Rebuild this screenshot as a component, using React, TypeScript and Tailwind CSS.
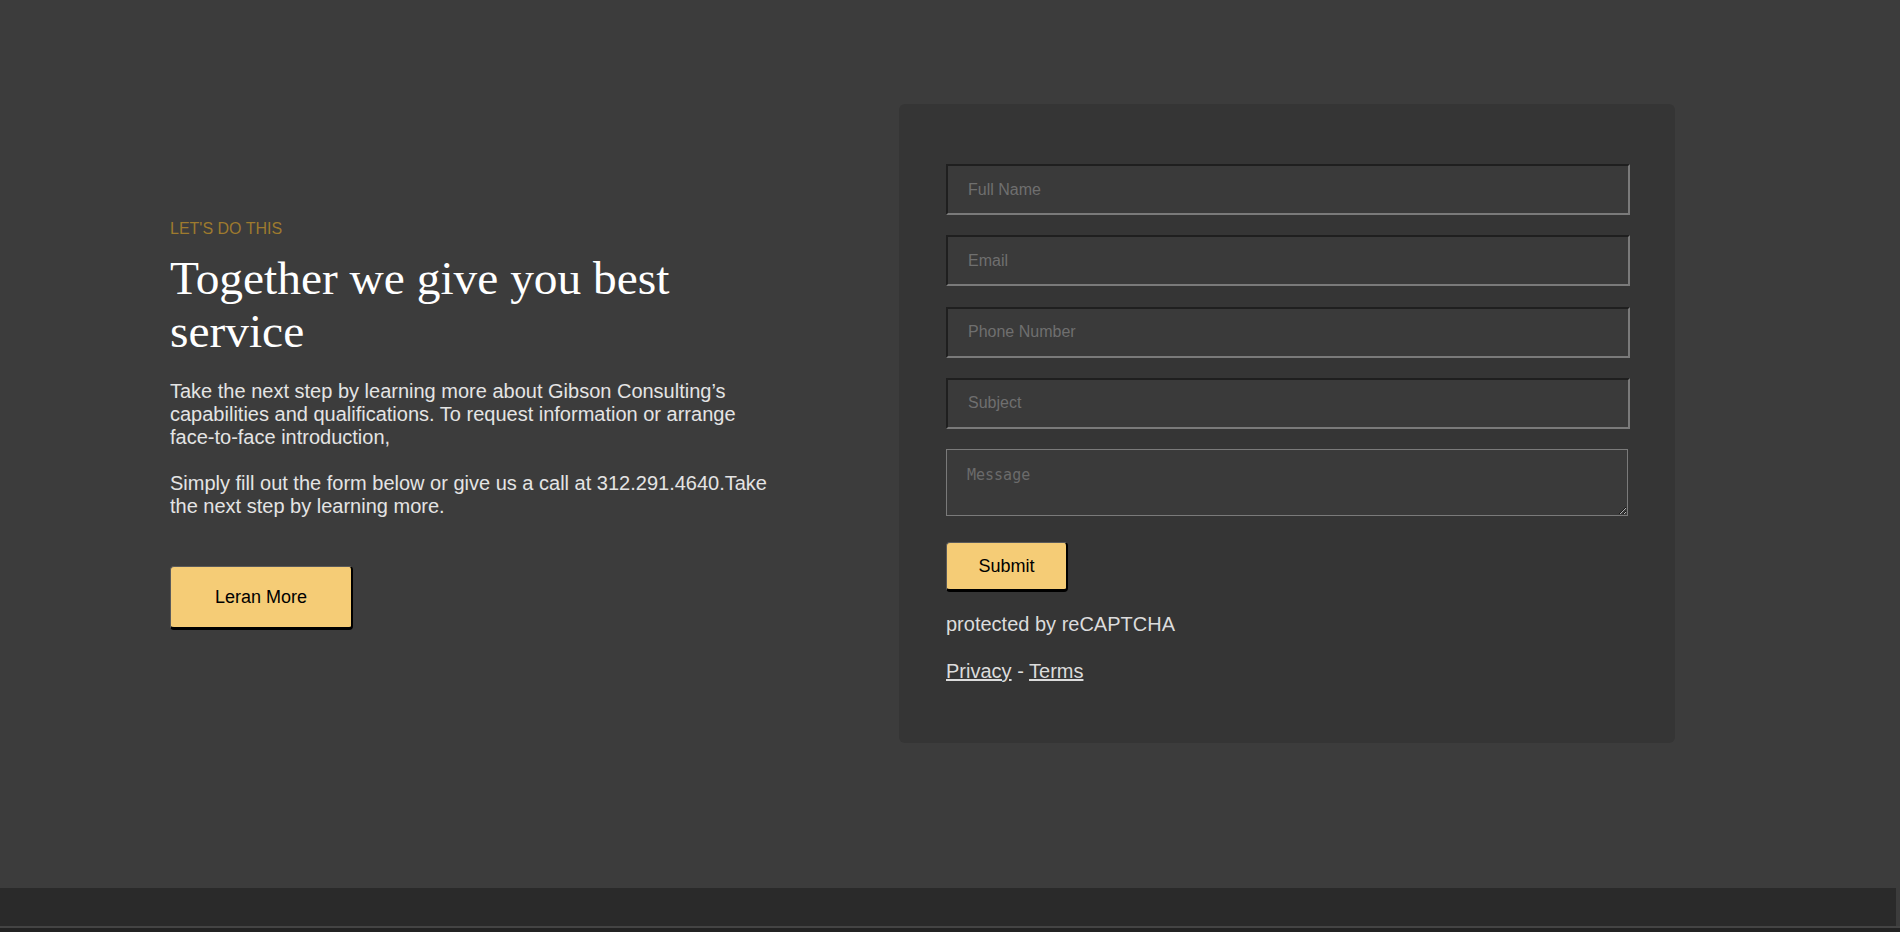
export default function App() {
  const fields = ["Full Name", "Email", "Phone Number", "Subject"];

  return (
    <div className="bg-[#3c3c3c] font-['Liberation_Sans',Arial,sans-serif]">
      <section className="h-[888px] pt-[104px]">
        <div className="flex items-center pl-[170px]">
          <div className="w-[729px]">
            <div className="w-[608px]">
              <p className="text-[16px] text-[#9e7a2e] uppercase">LET'S DO THIS</p>
              <h1 className="mt-[11px] font-['Liberation_Serif','Times_New_Roman',serif] text-[47.4px] leading-[53px] text-white">
                Together we give you best service
              </h1>
              <p className="mt-[22.7px] text-[20px] leading-[23px] text-[#e4e4e4]">
                Take the next step by learning more about Gibson Consulting’s capabilities and qualifications. To request
                information or arrange face-to-face introduction,
                <br />
                <br />
                Simply fill out the form below or give us a call at 312.291.4640.Take the next step by learning more.
              </p>
              <button className="mt-12 h-[64px] w-[183px] rounded-[4px] border-t border-l border-[#5a5a5a] border-r-2 border-b-[3px] border-r-black border-b-black bg-[#f5cc76] text-[18px] text-black">
                Leran More
              </button>
            </div>
          </div>

          <div className="w-[776px] rounded-md bg-[#353535] pl-[47px] pt-[60px] pb-[60px]">
            <form onSubmit={(e) => e.preventDefault()}>
              {fields.map((f) => (
                <input
                  key={f}
                  type="text"
                  placeholder={f}
                  className="mb-[20.33px] block h-[51px] w-[684px] border-2 border-t-[#1f1f1f] border-l-[#1f1f1f] border-b-[#7a7a7a] border-r-[#7a7a7a] bg-[#3a3a3a] pl-5 text-[16px] text-[#ddd] outline-none placeholder:text-[#6f6f6f]"
                />
              ))}
              <textarea
                placeholder="Message"
                className="block h-[67px] w-[682px] border border-[#7a7a7a] bg-[#3a3a3a] px-5 py-[14px] font-['DejaVu_Sans_Mono',monospace] text-[15px] text-[#ddd] outline-none placeholder:text-[#6b6b6b]"
              />
              <button
                type="submit"
                className="mt-[26px] h-[50px] w-[122px] rounded-[4px] border-t border-l border-[#5a5a5a] border-r-2 border-b-[3px] border-r-black border-b-black bg-[#f5cc76] text-[18px] text-black"
              >
                Submit
              </button>
            </form>
            <p className="mt-[21px] text-[20px] leading-[23px] text-[#dcdcdc]">protected by reCAPTCHA</p>
            <p className="mt-[23.6px] text-[20px] leading-[23px] text-[#dcdcdc]">
              <a href="#" className="underline">
                Privacy
              </a>{" "}
              -{" "}
              <a href="#" className="underline">
                Terms
              </a>
            </p>
          </div>
        </div>
      </section>

      <footer>
        <div className="mr-[4px] h-[38px] bg-[#2a2a2a]" />
        <div className="h-[2px] bg-[#444]" />
        <div className="h-[4px] bg-[#232323]" />
      </footer>
    </div>
  );
}
